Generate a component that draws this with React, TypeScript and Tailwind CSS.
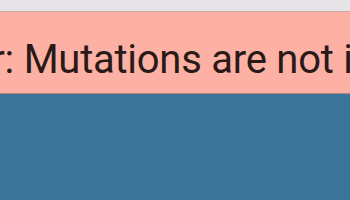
export default function App() {
  return (
    <div className="w-[350px] h-[200px] overflow-hidden flex flex-col bg-[#3c7399]">
      {/* window chrome */}
      <div className="h-[12px] bg-[#e6e4e6] border-b border-[#c9a9a4]" />

      {/* error banner */}
      <div className="h-[82px] bg-[#fdb1a5] border-b border-[#b0837c] flex items-center overflow-hidden">
        <span
          className="whitespace-nowrap -ml-[80px] mt-[14px] text-[40px] tracking-[-0.25px] leading-none text-[#2a1a17]"
          style={{ fontFamily: 'Roboto, "Liberation Sans", sans-serif' }}
        >
          Error: Mutations are not in
        </span>
      </div>

      {/* content area */}
      <div className="flex-1 bg-[#3c7399]" />
    </div>
  );
}
